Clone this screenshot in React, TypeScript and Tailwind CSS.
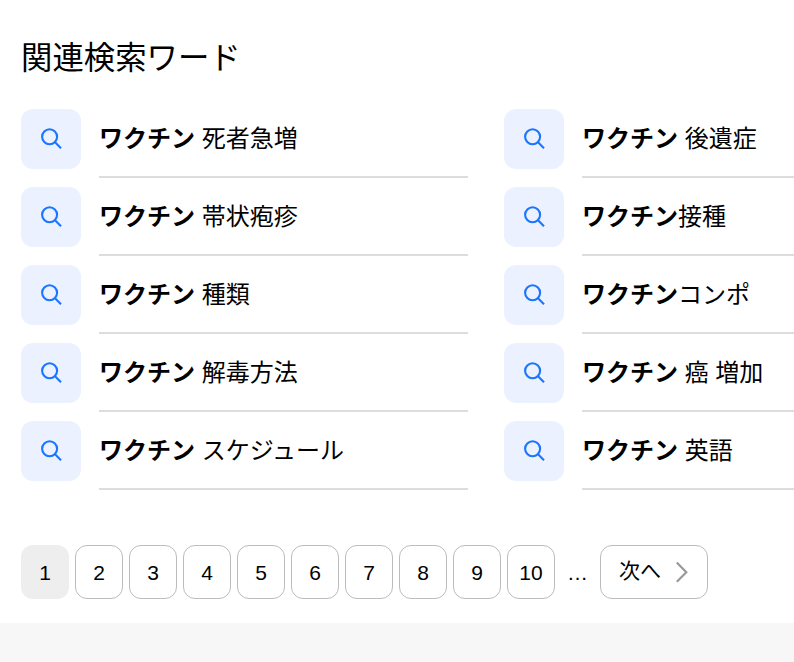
const words = [
  { bold: "ワクチン", rest: " 死者急増" },
  { bold: "ワクチン", rest: " 後遺症" },
  { bold: "ワクチン", rest: " 帯状疱疹" },
  { bold: "ワクチン", rest: "接種" },
  { bold: "ワクチン", rest: " 種類" },
  { bold: "ワクチン", rest: "コンポ" },
  { bold: "ワクチン", rest: " 解毒方法" },
  { bold: "ワクチン", rest: " 癌 増加" },
  { bold: "ワクチン", rest: " スケジュール" },
  { bold: "ワクチン", rest: " 英語" },
];

const pages = [1, 2, 3, 4, 5, 6, 7, 8, 9, 10];

function SearchIcon() {
  return (
    <svg width="24" height="24" viewBox="0 0 24 24" fill="none" stroke="#1a75ff" strokeWidth="2.1">
      <circle cx="10.6" cy="9.8" r="7.5" />
      <path d="M15.8 15L22 21.2" />
    </svg>
  );
}

function RelatedWord({ bold, rest }: { bold: string; rest: string }) {
  return (
    <li>
      <a className="flex h-[78px]">
        <span className="mt-[9px] flex size-[60px] shrink-0 items-center justify-center rounded-xl bg-[#ebf1ff]">
          <SearchIcon />
        </span>
        <span className="ml-[18px] grow border-b-2 border-[#dddddd] pt-[21px] text-[24px] leading-[36px] whitespace-pre">
          <b>{bold}</b>
          {rest}
        </span>
      </a>
    </li>
  );
}

export default function App() {
  return (
    <div className="h-[662px] w-[794px] overflow-hidden bg-white font-['Liberation_Sans','Noto_Sans_CJK_JP',sans-serif] text-black">
      <section className="px-[21px] pt-[36px]">
        <h2 className="h-[64px] text-[31.4px] leading-[46px]">関連検索ワード</h2>
        <ul className="grid w-[930px] grid-cols-2 gap-x-9">
          {words.map((word, index) => (
            <RelatedWord key={index} bold={word.bold} rest={word.rest} />
          ))}
        </ul>
      </section>

      <nav className="mt-[55px] flex h-[54px] gap-1.5 px-[21px] text-[21px]">
        {pages.map((page) => (
          <a
            key={page}
            className={`flex w-12 items-center justify-center rounded-xl pt-0.5 ${
              page === 1 ? "bg-[#eeeeee]" : "border border-[#bbbbbb]"
            }`}
          >
            {page}
          </a>
        ))}
        <span className="flex w-[33px] items-center justify-center pt-0.5">…</span>
        <a className="flex w-[108px] items-center rounded-xl border border-[#bbbbbb] pl-[18px]">
          <span className="pb-0.5">次へ</span>
          <svg className="ml-[14px]" width="13" height="22" viewBox="0 0 13 22" fill="none" stroke="#999999" strokeWidth="2.2">
            <path d="M1.8 1.6L11.3 11.2L1.8 20.8" />
          </svg>
        </a>
      </nav>

      <footer className="mt-6 h-[39px] bg-[#f7f7f7]" />
    </div>
  );
}
